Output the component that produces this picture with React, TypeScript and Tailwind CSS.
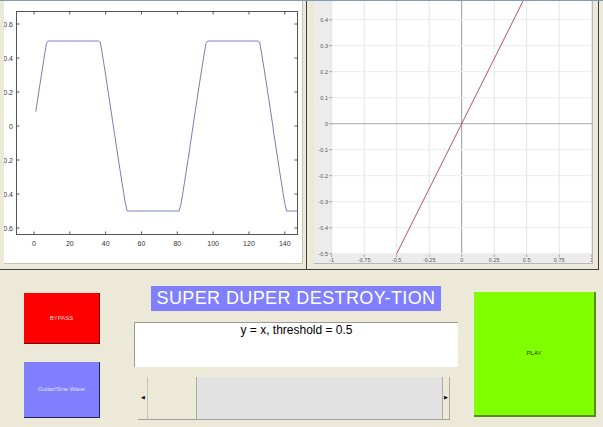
import React from 'react';

const font = "'Liberation Sans', Arial, sans-serif";

// clipped sine, same as the distortion preview
const wavePts = Array.from({ length: 147 }, (_, i) => {
  const t = i + 1;
  const v = Math.max(-0.5, Math.min(0.5, Math.sin((2 * Math.PI * (t + 0.2)) / 89)));
  return `${(34 + t * 1.7914).toFixed(1)},${(126 - v * 170).toFixed(1)}`;
}).join(' ');

const waveY = [0.6, 0.4, 0.2, 0, -0.2, -0.4, -0.6];
const waveX = [0, 20, 40, 60, 80, 100, 120, 140];

function WavePlot() {
  return (
    <svg width={298} height={262} viewBox="4 1 298 262" style={{ fontFamily: font }}>
      <rect x={16.5} y={11.5} width={281} height={223} fill="none" stroke="#555" strokeWidth={1} />
      {waveY.map((v) => {
        const y = 126 - v * 170;
        return (
          <g key={v}>
            <line x1={16.5} x2={19.5} y1={y} y2={y} stroke="#555" />
            <line x1={294.5} x2={297.5} y1={y} y2={y} stroke="#555" />
            <text x={13} y={y + 2.5} fontSize={7} textAnchor="end" fill="#333">
              {Math.abs(v) === 0 ? '0' : Math.abs(v).toFixed(1)}
            </text>
          </g>
        );
      })}
      {waveX.map((t) => {
        const x = 34 + t * 1.7914;
        return (
          <g key={t}>
            <line x1={x} x2={x} y1={234.5} y2={231.5} stroke="#555" />
            <line x1={x} x2={x} y1={11.5} y2={14.5} stroke="#555" />
            <text x={x} y={246} fontSize={7} textAnchor="middle" fill="#333">{t}</text>
          </g>
        );
      })}
      <polyline points={wavePts} fill="none" stroke="#7b7bb8" strokeWidth={1} />
    </svg>
  );
}

const gridX = [-1, -0.75, -0.5, -0.25, 0, 0.25, 0.5, 0.75, 1];
const gridY = [0.4, 0.3, 0.2, 0.1, 0, -0.1, -0.2, -0.3, -0.4, -0.5];

function TransferPlot() {
  const px = (v: number) => 461.7 + v * 130;
  const py = (v: number) => 123.7 - v * 260;
  return (
    <svg width={278} height={262} viewBox="314 1 278 262" style={{ fontFamily: font }}>
      <rect x={314} y={1} width={278} height={262} fill="#ececec" />
      <rect x={332} y={1} width={260} height={253} fill="#fff" />
      {gridX.map((v) => (
        <line key={v} x1={px(v)} x2={px(v)} y1={1} y2={254} stroke={v === 0 ? '#9a9a9a' : '#e4e4e4'} />
      ))}
      {gridY.map((v) => (
        <g key={v}>
          <line x1={332} x2={592} y1={py(v)} y2={py(v)} stroke={v === 0 ? '#a8a8a8' : '#ececec'} />
          <line x1={329} x2={332} y1={py(v)} y2={py(v)} stroke="#777" strokeWidth={0.6} />
          <text x={328} y={py(v) + 2} fontSize={5.5} textAnchor="end" fill="#555">{v}</text>
        </g>
      ))}
      {gridX.map((v) => (
        <g key={'l' + v}>
          <line x1={px(v)} x2={px(v)} y1={254.5} y2={257} stroke="#777" strokeWidth={0.6} />
          <text x={px(v)} y={262} fontSize={5.5} textAnchor="middle" fill="#555">{v}</text>
        </g>
      ))}
      <line x1={px(-0.5)} y1={py(-0.5)} x2={px(0.5)} y2={py(0.5)} stroke="#b23a4c" strokeWidth={0.9} />
    </svg>
  );
}

export default function App() {
  return (
    <div
      className="w-[603px] h-[427px] bg-[#ece9d8] overflow-hidden border-t border-[#7f9db9] flex flex-col"
      style={{ fontFamily: font }}
    >
      <div className="flex h-[269px] shrink-0">
        <div className="w-[307px] h-full border-r border-b border-[#404040] pl-[4px]">
          <div className="w-[299px] h-[263px] bg-white border-r border-b border-[#c8c4b4]">
            <WavePlot />
          </div>
        </div>
        <div className="w-[292px] h-full border-r border-b border-[#404040] pl-[7px]">
          <div className="w-[279px] h-[263px] border-r border-b border-[#b8b8b8]">
            <TransferPlot />
          </div>
        </div>
      </div>

      <div className="flex pl-[24px]">
        <div className="w-[76px] flex flex-col pt-[23px]">
          <button className="h-[51px] bg-[#ff0000] border-r border-b border-[#700000] text-[6px] text-[#ffd0d0] flex items-center justify-center">
            BYPASS
          </button>
          <button className="mt-[18px] h-[56px] bg-[#8080ff] border-r border-b border-[#202060] text-[6px] text-[#e0e0ff] flex items-center justify-center">
            Guitar/Sine Wave
          </button>
        </div>

        <div className="ml-[34px] w-[324px] flex flex-col">
          <div className="mt-[16px] mx-auto w-[290px] h-[25px] bg-[#8080ff] text-white text-[18px] tracking-[0.4px] leading-[25px] text-center">
            SUPER DUPER DESTROY-TION
          </div>
          <div className="mt-[11px] h-[45px] bg-white border-t border-l border-[#9a9a9a] text-[12px] text-black text-center leading-[14px]">
            y = x, threshold = 0.5
          </div>
          <div className="mt-[10px] ml-[4px] w-[312px] h-[43px] flex bg-[#e2e2e2] border-b border-[#a0a0a0]">
            <div className="w-[10px] bg-[#ece9d8] border-r border-[#c8c4b4] flex items-center justify-center text-[5px] text-black">◀</div>
            <div className="w-[49px] bg-[#ece9d8] border-r border-[#b0ac9c]"></div>
            <div className="flex-1"></div>
            <div className="w-[8px] bg-[#ece9d8] border-l border-r border-[#b0ac9c] flex items-center justify-center text-[5px] text-black">▶</div>
          </div>
        </div>

        <button className="ml-[16px] mt-[22px] w-[122px] h-[125px] bg-[#80ff00] border-r-2 border-b-2 border-[#5c8a1c] text-[6px] text-[#203010] flex items-center justify-center">
          PLAY
        </button>
      </div>
    </div>
  );
}
